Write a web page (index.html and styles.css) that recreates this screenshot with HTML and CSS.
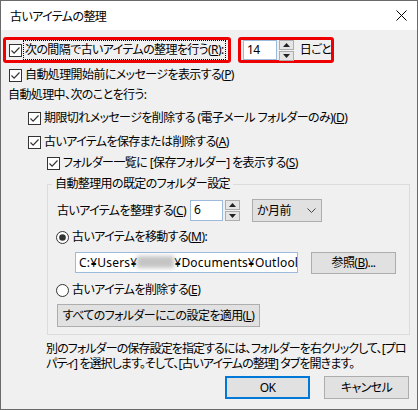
FILE: index.html
```html
<!DOCTYPE html>
<html lang="ja">
<head>
    <meta charset="UTF-8">
    <title>古いアイテムの整理</title>
    <link rel="stylesheet" href="styles.css">
</head>
<body>
<div class="dialog">
    <div class="titlebar">
        <span class="title">古いアイテムの整理</span>
        <svg class="close" width="11" height="11" viewBox="0 0 11 11"><path d="M0.5 0.5l10 10M10.5 0.5l-10 10" stroke="#000" stroke-width="1"/></svg>
    </div>

    <!-- 間隔 -->
    <div class="row interval">
        <div class="mark mark-check">
            <span class="check">
                <svg class="cb" width="13" height="13" viewBox="0 0 13 13"><rect x="0.5" y="0.5" width="12" height="12" fill="#fff" stroke="#333"/><path d="M2.5 6.5l2.6 2.6 5.4-5.6" fill="none" stroke="#333" stroke-width="1.2"/></svg>
                <span class="focus">次の間隔で古いアイテムの整理を行う(<u>R</u>):</span>
            </span>
        </div>
        <div class="mark mark-days">
            <span class="field num">14</span>
            <span class="spin">
                <span class="spin-btn"><svg width="7" height="4" viewBox="0 0 7 4"><path d="M0 4h7L3.5 0z" fill="#222"/></svg></span>
                <span class="spin-btn"><svg width="7" height="4" viewBox="0 0 7 4"><path d="M0 0h7L3.5 4z" fill="#222"/></svg></span>
            </span>
            <span class="unit">日ごと</span>
        </div>
    </div>

    <div class="row lv0 r2">
        <svg class="cb" width="13" height="13" viewBox="0 0 13 13"><rect x="0.5" y="0.5" width="12" height="12" fill="#fff" stroke="#333"/><path d="M2.5 6.5l2.6 2.6 5.4-5.6" fill="none" stroke="#333" stroke-width="1.2"/></svg>
        <span class="txt">自動処理開始前にメッセージを表示する(<u>P</u>)</span>
    </div>

    <div class="row r3">自動処理中、次のことを行う:</div>

    <div class="row lv1 r4">
        <svg class="cb" width="13" height="13" viewBox="0 0 13 13"><rect x="0.5" y="0.5" width="12" height="12" fill="#fff" stroke="#333"/><path d="M2.5 6.5l2.6 2.6 5.4-5.6" fill="none" stroke="#333" stroke-width="1.2"/></svg>
        <span class="txt">期限切れメッセージを削除する (電子メール フォルダーのみ)(<u>D</u>)</span>
    </div>

    <div class="row lv1 r5">
        <svg class="cb" width="13" height="13" viewBox="0 0 13 13"><rect x="0.5" y="0.5" width="12" height="12" fill="#fff" stroke="#333"/><path d="M2.5 6.5l2.6 2.6 5.4-5.6" fill="none" stroke="#333" stroke-width="1.2"/></svg>
        <span class="txt">古いアイテムを保存または削除する(<u>A</u>)</span>
    </div>

    <div class="row lv2 r6">
        <svg class="cb" width="13" height="13" viewBox="0 0 13 13"><rect x="0.5" y="0.5" width="12" height="12" fill="#fff" stroke="#333"/><path d="M2.5 6.5l2.6 2.6 5.4-5.6" fill="none" stroke="#333" stroke-width="1.2"/></svg>
        <span class="txt">フォルダー一覧に [保存フォルダー] を表示する(<u>S</u>)</span>
    </div>

    <!-- 既定のフォルダー設定 -->
    <fieldset class="group">
        <legend>自動整理用の既定のフォルダー設定</legend>

        <div class="row age">
            <span class="age-label">古いアイテムを整理する(<u>C</u>)</span>
            <span class="field small">6</span>
            <span class="spin">
                <span class="spin-btn"><svg width="7" height="4" viewBox="0 0 7 4"><path d="M0 4h7L3.5 0z" fill="#222"/></svg></span>
                <span class="spin-btn"><svg width="7" height="4" viewBox="0 0 7 4"><path d="M0 0h7L3.5 4z" fill="#222"/></svg></span>
            </span>
            <span class="combo">か月前
                <svg width="9" height="5" viewBox="0 0 9 5"><path d="M0.5 0.5l4 4 4-4" fill="none" stroke="#444"/></svg>
            </span>
        </div>

        <div class="row radio-row rm">
            <svg class="rb" width="13" height="13" viewBox="0 0 13 13"><circle cx="6.5" cy="6.5" r="6" fill="#fff" stroke="#333"/><circle cx="6.5" cy="6.5" r="3.3" fill="#333"/></svg>
            <span class="txt">古いアイテムを移動する(<u>M</u>):</span>
        </div>

        <div class="row path-row">
            <span class="path-field"><span class="path-text">C:¥Users¥<span class="blur"></span>¥Documents¥Outlool</span></span>
            <span class="btn browse">参照(<u>B</u>)...</span>
        </div>

        <div class="row radio-row re">
            <svg class="rb" width="13" height="13" viewBox="0 0 13 13"><circle cx="6.5" cy="6.5" r="6" fill="#fff" stroke="#333"/></svg>
            <span class="txt">古いアイテムを削除する(<u>E</u>)</span>
        </div>

        <div class="row apply-row">
            <span class="btn apply">すべてのフォルダーにこの設定を適用(<u>L</u>)</span>
        </div>
    </fieldset>

    <p class="note">別のフォルダーの保存設定を指定するには、フォルダーを右クリックして、[プロ<br>パティ] を選択します。そして、[古いアイテムの整理] タブを開きます。</p>

    <div class="row actions">
        <span class="btn ok">OK</span>
        <span class="btn">キャンセル</span>
    </div>
</div>
</body>
</html>
```

FILE: styles.css
```css
* {
    margin: 0;
    padding: 0;
    box-sizing: border-box;
}

body {
    background: #fff;
    font-family: "Noto Sans", "Noto Sans CJK JP", sans-serif;
    font-size: 12px;
    letter-spacing: -0.6px;
    color: #000;
    font-feature-settings: "palt";
}

u {
    text-decoration: underline;
    text-underline-offset: 1px;
}

.dialog {
    width: 418px;
    height: 410px;
    border: 1px solid #6a6a6a;
    background: #f0f0f0;
    overflow: hidden;
}

.titlebar {
    height: 29px;
    background: #fff;
    display: flex;
    align-items: center;
    justify-content: space-between;
    padding: 0 10px 0 9px;
}

.row {
    display: flex;
    align-items: center;
    height: 20px;
    line-height: 16px;
    white-space: nowrap;
}

.txt {
    margin-left: 3px;
}

/* 赤枠 */
.interval {
    margin-top: 7px;
    height: 26px;
    align-items: stretch;
    padding-left: 2px;
    gap: 7px;
}

.mark {
    border: 3px solid #ee0000;
    border-radius: 3px;
    display: flex;
    align-items: center;
}

.mark-check {
    width: 228px;
    padding-left: 3px;
}

.mark-days {
    width: 96px;
    padding-left: 2px;
}

.check {
    display: flex;
    align-items: center;
}

.focus {
    margin-left: 1px;
    padding: 1px 1px;
    border: 1px dotted #000;
}

.field {
    background: #fff;
    border: 1px solid #9db9dc;
    height: 20px;
    line-height: 18px;
    padding-left: 3px;
}

.num {
    width: 34px;
}

.spin {
    display: flex;
    flex-direction: column;
    gap: 1px;
    width: 15px;
    height: 21px;
    margin-left: 2px;
}

.spin-btn {
    flex: 1;
    border: 1px solid #adadad;
    background: #e5e5e5;
    display: flex;
    align-items: center;
    justify-content: center;
}

.unit {
    margin-left: 6px;
}

.lv0 { padding-left: 8px; }
.lv1 { padding-left: 27px; }
.lv2 { padding-left: 46px; }

.r2 { margin-top: 2px; }
.r3 { padding-left: 7px; }
.r4 { margin-top: 3px; }
.r5 { margin-top: 4px; }
.r6 { margin-top: 1px; }

/* グループ */
.group {
    margin: 3px 0 0 46px;
    width: 363px;
    border: 1px solid #dcdcdc;
    padding: 0 0 7px 0;
}

.group legend {
    margin-left: 4px;
    padding: 0 3px;
    line-height: 16px;
}

.age {
    margin-top: 7px;
    height: 23px;
    padding-left: 9px;
}

.age-label {
    width: 133px;
}

.small {
    width: 33px;
    height: 21px;
}

.combo {
    margin-left: 12px;
    width: 70px;
    height: 23px;
    border: 1px solid #adadad;
    background: #e1e1e1;
    display: flex;
    align-items: center;
    justify-content: space-between;
    padding: 0 5px 0 4px;
}

.radio-row {
    padding-left: 8px;
}

.rm { margin-top: 5px; }
.re { margin-top: 6px; }

.path-row {
    margin-top: 4px;
    height: 23px;
    padding-left: 27px;
}

.path-field {
    width: 223px;
    height: 21px;
    line-height: 19px;
    background: #fff;
    border: 1px solid #9db9dc;
    padding-left: 3px;
    overflow: hidden;
}

.path-text {
    letter-spacing: 0.2px;
}

.blur {
    display: inline-block;
    width: 37px;
    height: 12px;
    vertical-align: -1px;
    background: #c4c4c4;
    filter: blur(2px);
}

.btn {
    display: flex;
    align-items: center;
    justify-content: center;
    height: 23px;
    width: 85px;
    background: #e1e1e1;
    border: 1px solid #adadad;
}

.browse {
    margin-left: 13px;
    height: 22px;
    align-self: flex-start;
    margin-top: 1px;
}

.apply-row {
    margin-top: 4px;
    height: 23px;
    padding-left: 9px;
}

.apply {
    width: 203px;
}

.note {
    margin: 6px 0 0 45px;
    line-height: 15px;
    letter-spacing: -0.9px;
    white-space: nowrap;
}

.actions {
    margin-top: 5px;
    height: 23px;
    justify-content: flex-end;
    padding-right: 8px;
    gap: 14px;
}

.ok {
    border: 2px solid #0078d7;
}
```
